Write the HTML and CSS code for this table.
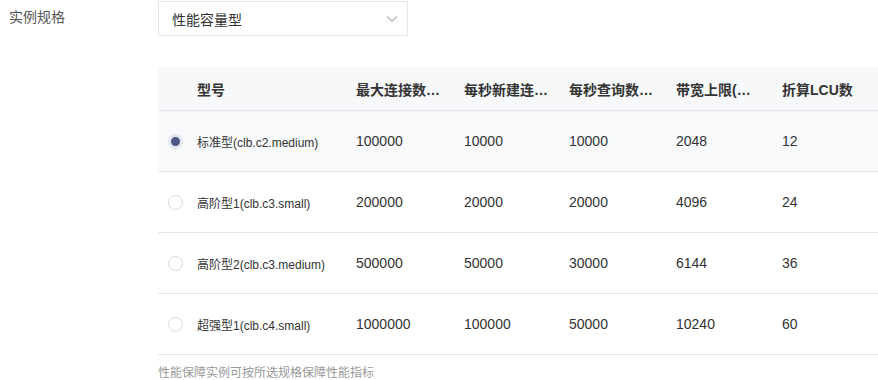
FILE: index.html
```html
<!DOCTYPE html>
<html lang="zh-CN">
<head>
    <meta charset="UTF-8">
    <title>实例规格</title>
    <link rel="stylesheet" href="styles.css">
</head>
<body>
    <div class="form-row">
        <div class="form-label">实例规格</div>
        <div class="form-control">
            <div class="select">
                <span>性能容量型</span>
                <svg class="select-arrow" width="12" height="8" viewBox="0 0 12 8">
                    <path d="M1 1.5 L6 6 L11 1.5" fill="none" stroke="#b4b9c4" stroke-width="1.4"/>
                </svg>
            </div>
        </div>
    </div>
    <div class="form-row spec-row">
        <div></div>
        <div class="form-control">
            <table class="spec-table">
                <colgroup>
                    <col style="width:27px">
                    <col style="width:159px">
                    <col style="width:108px">
                    <col style="width:105px">
                    <col style="width:107px">
                    <col style="width:106px">
                    <col style="width:108px">
                </colgroup>
                <thead>
                    <tr>
                        <th class="radio-cell"></th>
                        <th><span class="th-text">型号</span></th>
                        <th><span class="th-text" title="最大连接数(个)">最大连接数(个)</span></th>
                        <th><span class="th-text" title="每秒新建连接数(个)">每秒新建连接数(个)</span></th>
                        <th><span class="th-text" title="每秒查询数(个)">每秒查询数(个)</span></th>
                        <th><span class="th-text" title="带宽上限(Mbps)">带宽上限(Mbps)</span></th>
                        <th><span class="th-text">折算LCU数</span></th>
                    </tr>
                </thead>
                <tbody>
                    <tr class="selected">
                        <td class="radio-cell"><span class="radio checked"></span></td>
                        <td class="model">标准型(clb.c2.medium)</td>
                        <td>100000</td>
                        <td>10000</td>
                        <td>10000</td>
                        <td>2048</td>
                        <td>12</td>
                    </tr>
                    <tr>
                        <td class="radio-cell"><span class="radio"></span></td>
                        <td class="model">高阶型1(clb.c3.small)</td>
                        <td>200000</td>
                        <td>20000</td>
                        <td>20000</td>
                        <td>4096</td>
                        <td>24</td>
                    </tr>
                    <tr>
                        <td class="radio-cell"><span class="radio"></span></td>
                        <td class="model">高阶型2(clb.c3.medium)</td>
                        <td>500000</td>
                        <td>50000</td>
                        <td>30000</td>
                        <td>6144</td>
                        <td>36</td>
                    </tr>
                    <tr>
                        <td class="radio-cell"><span class="radio"></span></td>
                        <td class="model">超强型1(clb.c4.small)</td>
                        <td>1000000</td>
                        <td>100000</td>
                        <td>50000</td>
                        <td>10240</td>
                        <td>60</td>
                    </tr>
                </tbody>
            </table>
            <p class="form-help">性能保障实例可按所选规格保障性能指标</p>
        </div>
    </div>
</body>
</html>
```

FILE: styles.css
```css
body, html {
    margin: 0;
    padding: 0;
    background: #fff;
    font-family: "Liberation Sans", "Noto Sans CJK SC", sans-serif;
    color: #333;
}
.form-row {
    display: grid;
    grid-template-columns: 158px 720px;
}
.form-label {
    padding-left: 9px;
    font-size: 14px;
    line-height: 35px;
    color: #555;
}
.form-control {
    padding-top: 1px;
}
.select {
    box-sizing: border-box;
    width: 250px;
    height: 35px;
    border: 1px solid #e3e6eb;
    display: flex;
    align-items: center;
    justify-content: space-between;
    padding: 0 9px 0 13px;
    font-size: 14px;
    color: #333;
}
.spec-row {
    margin-top: 31px;
}
.spec-row .form-control {
    padding-top: 0;
}
.spec-table {
    width: 720px;
    table-layout: fixed;
    border-collapse: collapse;
}
.spec-table th,
.spec-table td {
    padding: 0 6px 0 12px;
    text-align: left;
    white-space: nowrap;
    overflow: hidden;
    border-bottom: 1px solid #e3e6ee;
}
.spec-table th {
    height: 43px;
    background: #f7f8fa;
    font-size: 14px;
    font-weight: bold;
    color: #333;
}
.th-text {
    display: block;
    max-width: 85px;
    overflow: hidden;
    text-overflow: ellipsis;
}
.spec-table td {
    height: 60px;
    font-size: 14px;
    color: #333;
}
.spec-table td.model {
    font-size: 12px;
}
.spec-table .radio-cell {
    padding: 0 0 0 10px;
}
.spec-table tr.selected td {
    background: #f8f9fb;
}
.radio {
    display: block;
    box-sizing: border-box;
    width: 15px;
    height: 15px;
    border: 1.5px solid #d6dae3;
    border-radius: 50%;
    background: #fff;
}
.radio.checked {
    border: 3px solid #e2e5ec;
    background: #4b5885;
}
.form-help {
    margin: 8px 0 0;
    font-size: 12px;
    color: #999;
}
```
